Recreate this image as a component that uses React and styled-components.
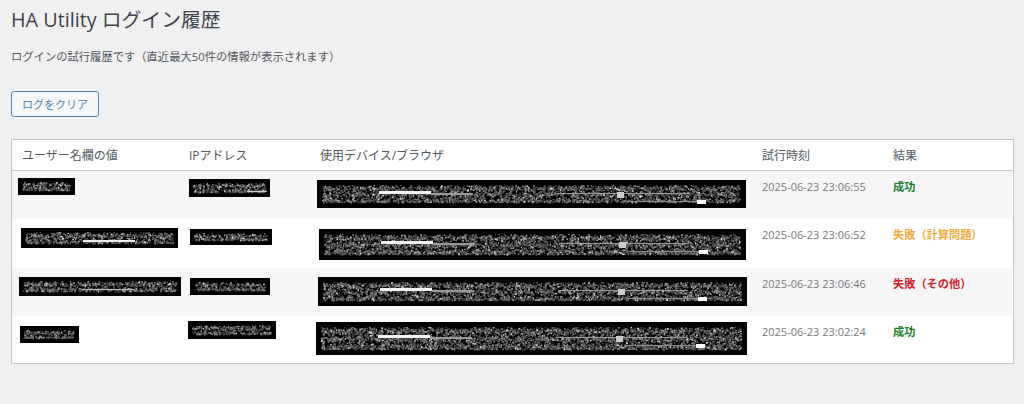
import React from "react";
import styled, { createGlobalStyle } from "styled-components";

const FONT = `"Open Sans", "Noto Sans CJK JP", sans-serif`;

const GlobalStyle = createGlobalStyle`
  html, body {
    margin: 0;
    padding: 0;
    background: #f0f0f1;
  }
  body {
    font-family: ${FONT};
    color: #50575e;
  }
`;

//styled ------------------------------------
const Wrap = styled.div`
  padding: 0 10px 0 11px;
  width: 1024px;
  height: 404px;
  box-sizing: border-box;
  overflow: hidden;
`;
const Title = styled.h1`
  margin: 0;
  padding-top: 6px;
  height: 35px;
  box-sizing: border-box;
  font-size: 19.8px;
  line-height: 28px;
  font-weight: 400;
  color: #3c434a;
`;
const Lead = styled.p`
  margin: 13px 0 0;
  font-size: 11.3px;
  line-height: 18px;
`;
const ClearButton = styled.button`
  display: block;
  margin-top: 25px;
  width: 88px;
  height: 26px;
  padding: 0;
  font-family: ${FONT};
  font-size: 11px;
  color: #4f86b0;
  background: #f6f7f7;
  border: 1px solid #4f86b0;
  border-radius: 3px;
`;
const Table = styled.table`
  margin-top: 22px;
  width: 1003px;
  table-layout: fixed;
  border-collapse: separate;
  border-spacing: 0;
  background: #fff;
  border: 1px solid #c3c4c7;
  font-size: 11px;
`;
const HeadCell = styled.th`
  height: 31px;
  padding: 0 10px;
  box-sizing: border-box;
  text-align: left;
  font-weight: 400;
  font-size: 12px;
  color: #50575e;
  border-bottom: 1px solid #c3c4c7;
`;
const Row = styled.tr`
  background: ${(p) => (p.$odd ? "#f6f6f7" : "#fff")};
`;
const Cell = styled.td`
  height: ${(p) => (p.$last ? 47 : 48)}px;
  padding: 8px 10px;
  box-sizing: border-box;
  vertical-align: top;
  line-height: 16px;
  color: #757a80;
`;
const Result = styled.strong`
  font-size: 11.2px;
  font-weight: 700;
  color: ${(p) => p.$color};
`;
const Redaction = styled.svg`
  display: block;
  margin: ${(p) => p.$top}px 0 0 ${(p) => p.$left}px;
  width: ${(p) => p.$w}px;
  height: ${(p) => p.$h}px;
  background: #000;
`;
const Speckle = styled.g`
  filter: blur(0.45px);
`;

// 黒塗りの中のノイズを描く
function Noise({ w, h, left, top, seed, inset = 4, lines = 2, marks = [] }) {
  let s = seed * 9301 + 49297;
  const rnd = () => {
    s = (s * 9301 + 49297) % 233280;
    return s / 233280;
  };
  const dots = [];
  const inner = h - inset * 2;
  const count = Math.floor((w - inset * 2) * inner * 0.42);
  for (let i = 0; i < count; i++) {
    const v = Math.floor(60 + rnd() * rnd() * 195);
    const line = Math.floor(rnd() * lines);
    const cy = inset + ((line + 0.5) * inner) / lines;
    const jitter = (rnd() + rnd() - 1) * (inner / lines) * 0.62;
    dots.push(
      <rect
        key={i}
        x={inset + rnd() * (w - inset * 2 - 1.5)}
        y={Math.max(inset, Math.min(h - inset - 1.5, cy + jitter))}
        width={1 + rnd()}
        height={1 + rnd()}
        fill={`rgb(${v},${v},${v})`}
      />
    );
  }
  return (
    <Redaction $w={w} $h={h} $left={left} $top={top} viewBox={`0 0 ${w} ${h}`}>
      <Speckle>
        {dots}
        {marks.map(([x, y, mw, mh, fill]) => (
          <rect key={`${x}-${y}`} x={x} y={y} width={mw} height={mh} fill={fill} />
        ))}
      </Speckle>
    </Redaction>
  );
}

// デバイス欄の明るい帯（高さに合わせてずらす）
const deviceMarks = (dy) => [
  [62, 11 + dy, 52, 3, "#f4f4f4"],
  [114, 13 + dy, 42, 2, "#999"],
  [240, 13 + dy, 130, 1, "#999"],
  [300, 12 + dy, 7, 6, "#ccc"],
  [310, 21 + dy, 70, 1, "#888"],
  [380, 20 + dy, 9, 4, "#fff"],
];

const rows = [
  {
    user: { w: 57, h: 17, left: -4, top: -1 },
    ip: { w: 81, h: 18, left: 0, top: 0, marks: [[58, 12, 20, 1, "#ccc"]] },
    device: { w: 429, h: 28, left: -3, top: 1, marks: deviceMarks(0) },
    time: "2025-06-23 23:06:55",
    result: "成功",
    color: "#1a7f2e",
  },
  {
    user: { w: 157, h: 20, left: -1, top: 1, marks: [[62, 12, 52, 2, "#eee"]] },
    ip: { w: 82, h: 16, left: 1, top: 2 },
    device: { w: 427, h: 31, left: -1, top: 2, marks: deviceMarks(1) },
    time: "2025-06-23 23:06:52",
    result: "失敗（計算問題）",
    color: "#f2a93b",
  },
  {
    user: { w: 162, h: 19, left: -3, top: 1, marks: [[63, 12, 52, 1, "#bbb"]] },
    ip: { w: 80, h: 17, left: 1, top: 2 },
    device: { w: 429, h: 29, left: -2, top: 1, marks: deviceMarks(0) },
    time: "2025-06-23 23:06:46",
    result: "失敗（その他）",
    color: "#d0202a",
  },
  {
    user: { w: 59, h: 17, left: -2, top: 2 },
    ip: { w: 88, h: 18, left: -1, top: -3 },
    device: { w: 431, h: 33, left: -4, top: -2, marks: deviceMarks(2) },
    time: "2025-06-23 23:02:24",
    result: "成功",
    color: "#1a7f2e",
  },
];

export default function App() {
  return (
    <>
      <GlobalStyle />
      <Wrap>
        <Title>HA Utility ログイン履歴</Title>
        <Lead>ログインの試行履歴です（直近最大50件の情報が表示されます）</Lead>
        <ClearButton>ログをクリア</ClearButton>
        <Table>
          <colgroup>
            <col style={{ width: 167 }} />
            <col style={{ width: 131 }} />
            <col style={{ width: 442 }} />
            <col style={{ width: 131 }} />
            <col />
          </colgroup>
          <thead>
            <tr>
              <HeadCell>ユーザー名欄の値</HeadCell>
              <HeadCell>IPアドレス</HeadCell>
              <HeadCell>使用デバイス/ブラウザ</HeadCell>
              <HeadCell>試行時刻</HeadCell>
              <HeadCell>結果</HeadCell>
            </tr>
          </thead>
          <tbody>
            {rows.map((r, i) => {
              const last = i === rows.length - 1;
              return (
                <Row key={r.time} $odd={i % 2 === 0}>
                  <Cell $last={last}>
                    <Noise {...r.user} seed={i + 1} />
                  </Cell>
                  <Cell $last={last}>
                    <Noise {...r.ip} seed={i + 11} />
                  </Cell>
                  <Cell $last={last}>
                    <Noise {...r.device} inset={5} lines={3} seed={i + 21} />
                  </Cell>
                  <Cell $last={last}>{r.time}</Cell>
                  <Cell $last={last}>
                    <Result $color={r.color}>{r.result}</Result>
                  </Cell>
                </Row>
              );
            })}
          </tbody>
        </Table>
      </Wrap>
    </>
  );
}
